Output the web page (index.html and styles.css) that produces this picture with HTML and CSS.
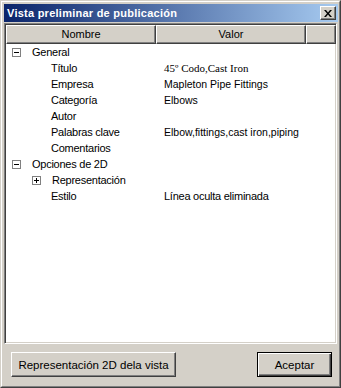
FILE: index.html
```html
<!DOCTYPE html>
<html lang="es">
<head>
<meta charset="utf-8">
<title>Vista preliminar de publicación</title>
<link rel="stylesheet" href="styles.css">
</head>
<body>
<div class="window">
  <div class="frame">
    <div class="titlebar">
      <span class="title">Vista preliminar de publicación</span>
      <button class="close" aria-label="Cerrar">
        <svg width="8" height="7" viewBox="0 0 8 7"><path d="M0 0h2l2 2.5L6 0h2L5 3.5 8 7H6L4 4.5 2 7H0l3-3.5z" fill="#000"/></svg>
      </button>
    </div>
    <div class="listview">
      <div class="header">
        <div class="hcell">Nombre</div>
        <div class="hcell">Valor</div>
        <div class="hcell"></div>
      </div>
      <div class="rows">
        <div class="row">
          <div class="name lvl0"><span class="box"><svg width="9" height="9" viewBox="0 0 9 9"><rect x="0.5" y="0.5" width="8" height="8" fill="#fff" stroke="#808080"/><path d="M2 4.5h5" stroke="#000"/></svg></span>General</div>
          <div class="val"></div>
        </div>
        <div class="row">
          <div class="name lvl1">Título</div>
          <div class="val serif">45º Codo,Cast Iron</div>
        </div>
        <div class="row">
          <div class="name lvl1">Empresa</div>
          <div class="val arial">Mapleton Pipe Fittings</div>
        </div>
        <div class="row">
          <div class="name lvl1">Categoría</div>
          <div class="val arial">Elbows</div>
        </div>
        <div class="row">
          <div class="name lvl1">Autor</div>
          <div class="val arial"></div>
        </div>
        <div class="row">
          <div class="name lvl1">Palabras clave</div>
          <div class="val arial">Elbow,fittings,cast iron,piping</div>
        </div>
        <div class="row">
          <div class="name lvl1">Comentarios</div>
          <div class="val"></div>
        </div>
        <div class="row">
          <div class="name lvl0"><span class="box"><svg width="9" height="9" viewBox="0 0 9 9"><rect x="0.5" y="0.5" width="8" height="8" fill="#fff" stroke="#808080"/><path d="M2 4.5h5" stroke="#000"/></svg></span>Opciones de 2D</div>
          <div class="val"></div>
        </div>
        <div class="row">
          <div class="name lvl1b"><span class="box"><svg width="9" height="9" viewBox="0 0 9 9"><rect x="0.5" y="0.5" width="8" height="8" fill="#fff" stroke="#808080"/><path d="M2 4.5h5M4.5 2v5" stroke="#000"/></svg></span>Representación</div>
          <div class="val"></div>
        </div>
        <div class="row">
          <div class="name lvl1">Estilo</div>
          <div class="val">Línea oculta eliminada</div>
        </div>
      </div>
    </div>
    <div class="buttons">
      <button class="btn wide">Representación 2D dela vista</button>
      <button class="btn default">Aceptar</button>
    </div>
  </div>
</div>
</body>
</html>
```

FILE: styles.css
```css
html, body {
  margin: 0;
  padding: 0;
  background: #d4d0c8;
}

body {
  font-family: "Liberation Sans", Arial, sans-serif;
  font-size: 11px;
  color: #000;
}

.window {
  width: 341px;
  height: 388px;
  box-sizing: border-box;
  border: 1px solid;
  border-color: #d4d0c8 #404040 #404040 #d4d0c8;
  background: #d4d0c8;
}

.frame {
  height: 100%;
  box-sizing: border-box;
  border: 1px solid;
  border-color: #ffffff #808080 #808080 #ffffff;
  padding: 2px 1px 1px 2px;
  display: flex;
  flex-direction: column;
}

.titlebar {
  height: 18px;
  flex: none;
  background: linear-gradient(to right, #0a246a, #a6caf0);
  display: flex;
  align-items: center;
  justify-content: space-between;
  padding: 0 2px 0 3px;
}

.title {
  color: #fff;
  font-weight: bold;
  font-size: 11px;
  letter-spacing: 0.25px;
}

.close {
  width: 16px;
  height: 14px;
  padding: 0;
  margin: 0;
  background: #d4d0c8;
  border: 1px solid;
  border-color: #ffffff #404040 #404040 #ffffff;
  box-shadow: inset -1px -1px 0 #808080;
  display: flex;
  align-items: center;
  justify-content: center;
}

.listview {
  box-sizing: border-box;
  flex: none;
  margin-top: 1px;
  margin-right: 1px;
  height: 321px;
  border: 1px solid;
  border-color: #808080 #ffffff #ffffff #808080;
  box-shadow: inset 1px 1px 0 #404040, inset -1px -1px 0 #d4d0c8;
  padding: 1px;
  background: #fff;
  display: flex;
  flex-direction: column;
}

.header {
  display: grid;
  grid-template-columns: 150px 150px 30px;
  height: 19px;
}

.hcell {
  background: #d4d0c8;
  border: 1px solid;
  border-color: #ffffff #404040 #404040 #ffffff;
  box-shadow: inset -1px -1px 0 #808080;
  display: flex;
  align-items: center;
  justify-content: center;
  font-size: 11px;
  padding-bottom: 1px;
}

.rows {
  display: flex;
  flex-direction: column;
}

.row {
  display: grid;
  grid-template-columns: 150px 180px;
  height: 16px;
  align-items: center;
}

.name {
  display: flex;
  align-items: center;
  white-space: nowrap;
  letter-spacing: -0.25px;
}

.lvl0 {
  padding-left: 6px;
}

.lvl1 {
  padding-left: 45px;
}

.lvl1b {
  padding-left: 26px;
}

.box {
  display: inline-flex;
  width: 9px;
  height: 9px;
  margin-right: 11px;
}

.val {
  padding-left: 8px;
  white-space: nowrap;
  letter-spacing: -0.25px;
}

.serif {
  font-family: "Liberation Serif", "Times New Roman", serif;
  font-size: 11px;
  letter-spacing: 0;
}

.arial {
  font-size: 10.5px;
  letter-spacing: 0;
}

.buttons {
  flex: 1;
  display: flex;
  justify-content: space-between;
  align-items: flex-start;
  padding: 8px 6px 0 7px;
}

.btn {
  font-family: "Liberation Sans", Arial, sans-serif;
  font-size: 11.5px;
  color: #000;
  background: #d4d0c8;
  height: 25px;
  padding: 0;
  border: 1px solid;
  border-color: #ffffff #404040 #404040 #ffffff;
  box-shadow: inset -1px -1px 0 #808080;
}

.wide {
  width: 165px;
}

.default {
  width: 75px;
  border: 1px solid #000;
  box-shadow: inset 1px 1px 0 #ffffff, inset -1px -1px 0 #404040, inset -2px -2px 0 #808080;
}
```
